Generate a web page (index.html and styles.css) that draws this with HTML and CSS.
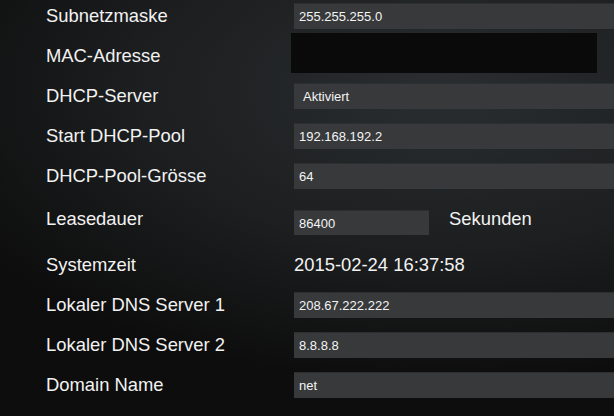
FILE: index.html
```html
<!DOCTYPE html>
<html lang="de">
<head>
  <meta charset="UTF-8">
  <meta name="viewport" content="width=device-width, initial-scale=1.0">
  <title>LAN Einstellungen</title>
  <link rel="stylesheet" href="styles.css">
</head>
<body>
  <div class="settings">
    <div class="row">
      <span class="label">Subnetzmaske</span>
      <div class="field">255.255.255.0</div>
    </div>
    <div class="row">
      <span class="label">MAC-Adresse</span>
      <div class="field mac"></div>
    </div>
    <div class="row">
      <span class="label">DHCP-Server</span>
      <div class="field select">Aktiviert</div>
    </div>
    <div class="row">
      <span class="label">Start DHCP-Pool</span>
      <div class="field">192.168.192.2</div>
    </div>
    <div class="row">
      <span class="label">DHCP-Pool-Grösse</span>
      <div class="field">64</div>
    </div>
    <div class="row lease">
      <span class="label">Leasedauer</span>
      <div class="field short">86400</div>
      <span class="unit">Sekunden</span>
    </div>
    <div class="row time">
      <span class="label">Systemzeit</span>
      <span class="value">2015-02-24 16:37:58</span>
    </div>
    <div class="row">
      <span class="label">Lokaler DNS Server 1</span>
      <div class="field">208.67.222.222</div>
    </div>
    <div class="row">
      <span class="label">Lokaler DNS Server 2</span>
      <div class="field">8.8.8.8</div>
    </div>
    <div class="row">
      <span class="label">Domain Name</span>
      <div class="field">net</div>
    </div>
  </div>
</body>
</html>
```

FILE: styles.css
```css
/* Page */
html, body {
  height: 100%;
}

body {
  margin: 0;
  overflow: hidden;
  font-family: 'Liberation Sans', Arial, sans-serif;
  color: #f2f2f2;
  background:
    radial-gradient(ellipse 90% 70% at 72% 22%, #2a2e30 0%, #1c1e1f 55%, #0d0d0d 100%);
}

/* Form rows */
.settings {
  margin-top: -4px;
  padding-left: 46px;
}

.row {
  display: flex;
  align-items: center;
  height: 40px;
}

.row.lease {
  margin-top: 3px;
}

.row.time {
  height: 46px;
  padding-top: 5px;
  box-sizing: border-box;
}

.label {
  width: 248px;
  flex-shrink: 0;
  font-size: 18.4px;
}

/* Inputs */
.field {
  flex: 1;
  height: 26px;
  margin-right: -20px;
  padding-left: 5px;
  box-sizing: border-box;
  background-color: #37393b;
  border-top: 1px solid #2c2e30;
  font-size: 13px;
  line-height: 25px;
  color: #f4f4f4;
}

.field.select {
  padding-left: 9px;
}

.field.mac {
  flex: none;
  width: 306px;
  height: 40px;
  margin-left: -3px;
  margin-top: -6px;
  margin-right: 0;
  border: none;
  background-color: #0a0a0b;
}

.field.short {
  flex: none;
  width: 135px;
  height: 25px;
  margin-top: 6px;
  margin-right: 20px;
}

.unit,
.value {
  font-size: 18.4px;
}
```
